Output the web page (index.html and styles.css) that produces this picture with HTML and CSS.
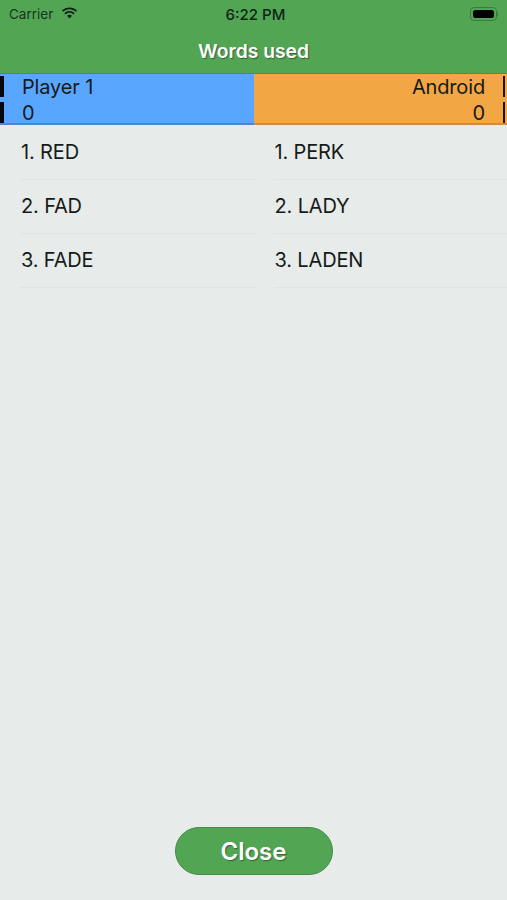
FILE: index.html
```html
<!DOCTYPE html>
<html lang="en">
<head>
<meta charset="utf-8">
<title>Words used</title>
<link rel="stylesheet" href="styles.css">
</head>
<body>
<div class="screen">
  <header class="top">
    <div class="status">
      <div class="status-left">
        <span class="carrier">Carrier</span>
        <svg class="wifi" width="18" height="13" viewBox="0 0 18 13"><path d="M9 2.2c2.6 0 5 1 6.800 2.700l1.200-1.300C14.900 1.600 12.100.4 9 .4S3.100 1.600 1 3.600l1.200 1.300C4 3.200 6.400 2.200 9 2.200z"/><path d="M9 6.100c1.600 0 3 .6 4.100 1.600l1.300-1.300C13 5 11.100 4.200 9 4.200S5 5 3.600 6.400l1.300 1.300C6 6.700 7.400 6.100 9 6.100z"/><path d="M9 8.100c-1 0-1.900.4-2.600 1L9 12l2.600-2.900c-.7-.6-1.600-1-2.600-1z"/></svg>
      </div>
      <span class="time">6:22 PM</span>
      <div class="battery"><span class="battery-body"><span class="battery-fill"></span></span><span class="battery-cap"></span></div>
    </div>
    <h1 class="title">Words used</h1>
  </header>
  <section class="scores">
    <div class="score score-left">
      <div class="score-row"><span class="tick"></span><span class="name">Player 1</span></div>
      <div class="score-row"><span class="tick"></span><span class="name">0</span></div>
    </div>
    <div class="score score-right">
      <div class="score-row"><span class="name">Android</span><span class="tick"></span></div>
      <div class="score-row"><span class="name">0</span><span class="tick"></span></div>
    </div>
  </section>
  <main class="lists">
    <ul class="list">
      <li>1. RED</li>
      <li>2. FAD</li>
      <li>3. FADE</li>
    </ul>
    <ul class="list">
      <li>1. PERK</li>
      <li>2. LADY</li>
      <li>3. LADEN</li>
    </ul>
  </main>
  <footer class="foot">
    <button class="close" type="button">Close</button>
  </footer>
</div>
</body>
</html>
```
FILE: styles.css
```css
* { box-sizing: border-box; }
html, body { margin: 0; padding: 0; }
body { font-family: "Inter", "Liberation Sans", sans-serif; color: #161a18; }
.screen { width: 507px; height: 900px; background: #e7ebea; display: flex; flex-direction: column; overflow: hidden; }
.top { background: #52a653; height: 74px; border-bottom: 1px solid #4a8f4c; display: flex; flex-direction: column; }
.status { height: 28px; padding: 0 9px; display: grid; grid-template-columns: 1fr auto 1fr; align-items: center; }
.status-left { display: flex; align-items: center; gap: 8px; }
.carrier { font-size: 13.5px; color: #173520; }
.wifi { fill: #0c2015; margin-top: -1px; width: 17px; height: 12.5px; }
.time { font-size: 15px; font-weight: 500; color: #10241a; margin-left: 4px; }
.battery { justify-self: end; display: flex; align-items: center; margin-top: -1px; }
.battery-body { width: 27px; height: 14px; border: 1px solid #3c7a42; border-radius: 4px; padding: 2px; display: block; }
.battery-fill { display: block; height: 100%; background: #000; border-radius: 2.500px; }
.battery-cap { width: 1.500px; height: 4px; background: #3c7a42; border-radius: 0 1px 1px 0; }
.title { margin: 0; font-size: 19.3px; line-height: 22px; font-weight: 600; color: #fff; text-align: center; padding-top: 12px; text-shadow: 1px 1px 1px rgba(40,70,40,.7); }
.scores { display: flex; height: 51px; }
.score { width: 50%; display: flex; flex-direction: column; gap: 5px; padding-top: 2px; }
.score-left { background: #58a6ff; border-bottom: 2px solid #4d88c6; }
.score-right { background: #f2a644; border-bottom: 2px solid #c79049; }
.score-row { height: 21px; display: flex; align-items: center; font-size: 20px; letter-spacing: -.15px; gap: 18px; }
.score-right .score-row { justify-content: flex-end; }
.tick { width: 4px; height: 21px; background: #05070a; }
.score-right .tick { width: 2px; background: #1d1408; margin-right: 2px; }
.lists { flex: 1; display: grid; grid-template-columns: 1fr 1fr; padding-top: 1px; }
.list { list-style: none; margin: 0; padding: 0 0 0 20px; }
.list li { height: 54px; padding-left: 1px; font-size: 20px; letter-spacing: -.15px; line-height: 53px; border-bottom: 1px solid #e0e4e3; }
.list:first-child li { margin-right: -3px; }
.foot { display: flex; justify-content: center; padding-bottom: 25px; }
.close { width: 158px; height: 48px; border-radius: 24px; background: #52a653; border: 1px solid #458a49; color: #fff; font-family: inherit; font-size: 24px; font-weight: 600; text-shadow: 1px 1px 1px rgba(40,70,40,.7); padding: 0; }
```
